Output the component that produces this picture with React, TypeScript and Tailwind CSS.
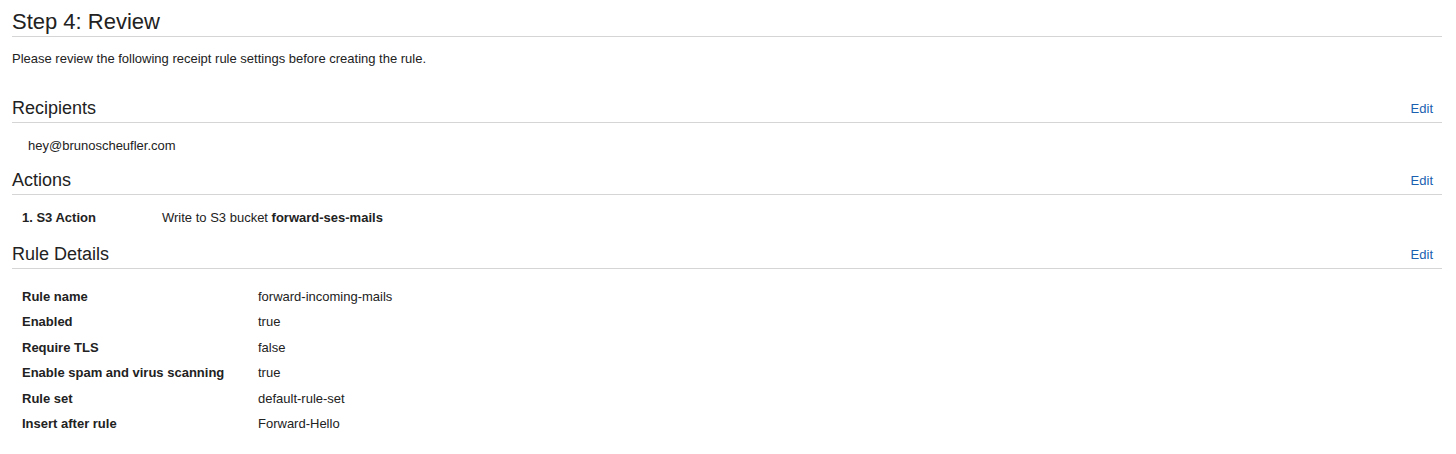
import React from 'react';

const Section = ({ title, children }: { title: string; children: React.ReactNode }) => (
  <div>
    <div className="flex items-end justify-between border-b border-[#d5d5d5] pb-[3px] mr-[14px]">
      <h2 className="text-[18px] leading-[22px] text-[#222]">{title}</h2>
      <a className="text-[13px] leading-[16px] text-[#1a5fb0] mr-[9px] mb-[2px] cursor-pointer">Edit</a>
    </div>
    {children}
  </div>
);

const details: [string, string][] = [
  ['Rule name', 'forward-incoming-mails'],
  ['Enabled', 'true'],
  ['Require TLS', 'false'],
  ['Enable spam and virus scanning', 'true'],
  ['Rule set', 'default-rule-set'],
  ['Insert after rule', 'Forward-Hello'],
];

export default function App() {
  return (
    <div className="bg-white w-[1456px] h-[454px] pl-[12px] pt-[10px] text-[#222] font-['Liberation_Sans',Arial,sans-serif] text-[13px]">
      <div className="border-b border-[#d5d5d5] mr-[14px] pb-[2px]">
        <h1 className="text-[22px] leading-[24px]">Step 4: Review</h1>
      </div>
      <p className="mt-[14px] leading-[16px]">Please review the following receipt rule settings before creating the rule.</p>

      <div className="mt-[30px]">
        <Section title="Recipients">
          <div className="pl-[16px] pt-[15px] pb-[15px] leading-[16px]">hey@brunoscheufler.com</div>
        </Section>
      </div>

      <Section title="Actions">
        <div className="flex pl-[10px] pt-[15px] pb-[17px] leading-[16px]">
          <span className="w-[140px] font-bold">1. S3 Action</span>
          <span>
            Write to S3 bucket <b>forward-ses-mails</b>
          </span>
        </div>
      </Section>

      <Section title="Rule Details">
        <div className="pl-[10px] pt-[15px]">
          {details.map(([k, v]) => (
            <div key={k} className="flex h-[25.4px] items-center">
              <span className="w-[236px] font-bold">{k}</span>
              <span>{v}</span>
            </div>
          ))}
        </div>
      </Section>
    </div>
  );
}
